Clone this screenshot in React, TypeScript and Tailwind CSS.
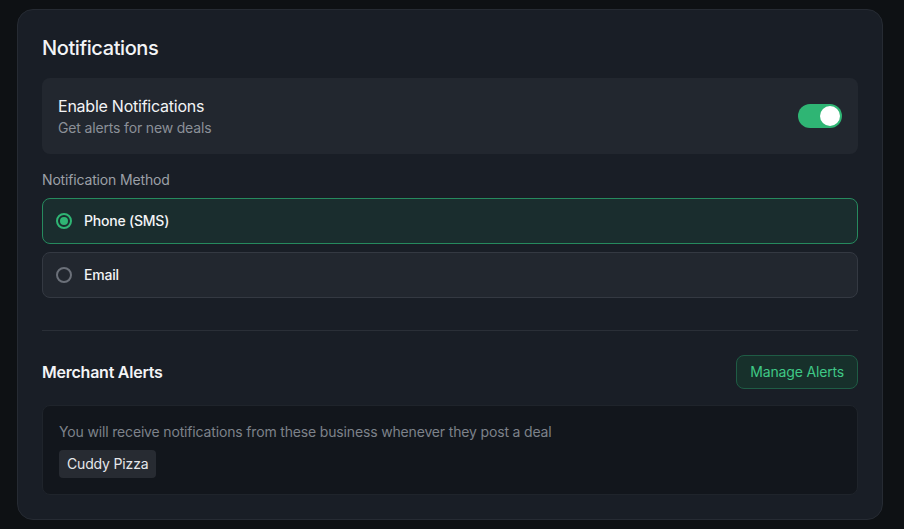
import { useState } from "react";

const methods = [
  { id: "sms", label: "Phone (SMS)" },
  { id: "email", label: "Email" },
];

const merchants = ["Cuddy Pizza"];

export default function App() {
  const [enabled, setEnabled] = useState(true);
  const [method, setMethod] = useState("sms");

  return (
    <div
      className="min-h-screen bg-[#0e1114] pl-[17px] pt-[9px] pb-2 text-white tracking-[-0.01em]"
      style={{ fontFamily: "Inter, 'Noto Sans', sans-serif" }}
    >
      <div className="w-[866px] rounded-2xl border border-[#262b33] bg-[#191e26] p-6">
        <h2 className="text-xl font-medium leading-7 tracking-[-0.02em] text-[#f3f4f6] mb-4">Notifications</h2>

        {/* Enable toggle */}
        <div className="flex items-center justify-between rounded-lg bg-[#22272f] px-4 py-4">
          <div>
            <p className="text-base font-normal leading-6 tracking-[-0.015em] text-[#f3f4f6]">Enable Notifications</p>
            <p className="text-sm leading-5 text-[#8b9098]">Get alerts for new deals</p>
          </div>
          <button
            onClick={() => setEnabled(!enabled)}
            className={`relative h-6 w-11 rounded-full transition-colors ${enabled ? "bg-[#2fb574]" : "bg-[#3a3f47]"}`}
          >
            <span
              className={`absolute top-0.5 h-5 w-5 rounded-full bg-white transition-all ${enabled ? "left-[22px]" : "left-0.5"}`}
            />
          </button>
        </div>

        {/* Method */}
        <p className="mt-4 mb-2 text-sm leading-5 text-[#9ca0a7]">Notification Method</p>
        <div className="flex flex-col gap-2">
          {methods.map((m) => {
            const active = method === m.id;
            return (
              <button
                key={m.id}
                onClick={() => setMethod(m.id)}
                className={`flex items-center gap-3 rounded-lg border px-[13px] py-3 text-left ${
                  active ? "border-[#268a5e] bg-[#1a2d2e]" : "border-[#343942] bg-[#22272f]"
                }`}
              >
                <span
                  className={`flex h-4 w-4 items-center justify-center rounded-full border-2 ${
                    active ? "border-[#2fb574]" : "border-[#6b7079]"
                  }`}
                >
                  {active && <span className="h-2 w-2 rounded-full bg-[#2fb574]" />}
                </span>
                <span className="text-sm font-medium leading-5 tracking-[-0.015em] text-[#f3f4f6]">{m.label}</span>
              </button>
            );
          })}
        </div>

        <div className="mt-8 mb-6 h-px bg-[#2a2f37]" />

        {/* Merchant alerts */}
        <div className="flex items-center justify-between">
          <h3 className="text-base font-semibold tracking-[-0.015em] text-[#f3f4f6]">Merchant Alerts</h3>
          <button className="h-[34px] rounded-lg border border-[#1f5c45] bg-[#17302b] px-[13px] text-sm font-normal text-[#3fc886]">
            Manage Alerts
          </button>
        </div>

        <div className="mt-4 rounded-lg border border-[#1f242b] bg-[#12161c] p-4">
          <p className="text-sm leading-5 text-[#7d828a]">
            You will receive notifications from these business whenever they post a deal
          </p>
          <div className="mt-2 flex flex-wrap gap-2">
            {merchants.map((m) => (
              <span key={m} className="rounded bg-[#272b32] px-2 py-1 text-sm leading-5 text-[#e5e7eb]">
                {m}
              </span>
            ))}
          </div>
        </div>
      </div>
    </div>
  );
}
